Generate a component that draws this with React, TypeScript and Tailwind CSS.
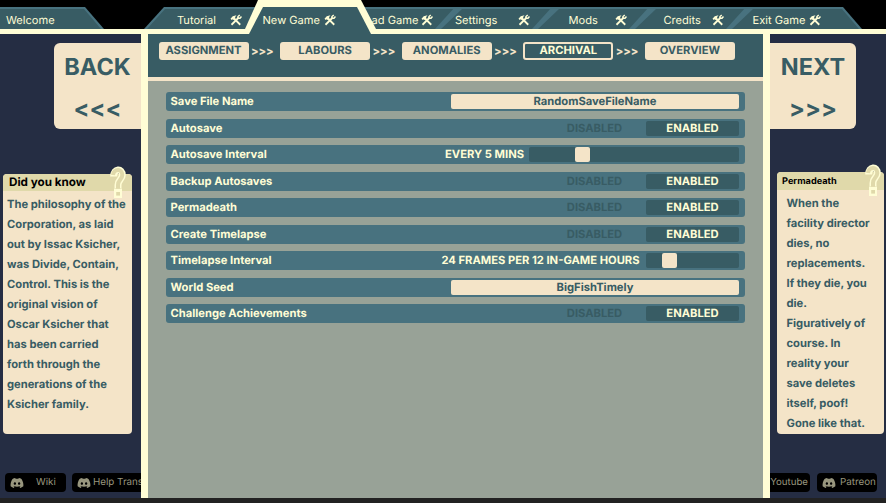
import type { ReactNode } from "react";
import { FaDiscord } from "react-icons/fa";

const ToolsIcon = () => (
  <svg viewBox="0 0 24 24" className="h-3 w-3 shrink-0" fill="none" stroke="#fffdd5">
    <path d="M8 9 L20.5 21.5" strokeWidth="3.6" />
    <path d="M1 9.5 L5.5 4.5 L13 2.5 L10 6.5 L11 8.5 L7.5 12 L5.5 10.3 L3.5 12 Z" fill="#fffdd5" stroke="none" />
    <path d="M3 21.5 L17 7.5" strokeWidth="3.6" />
    <path d="M19.5 2 L16 5 V8.5 H20 L23 5" strokeWidth="3" />
  </svg>
);

const QuestionMark = ({ className }: { className: string }) => (
  <svg viewBox="0 0 16 33" className={`absolute h-[33px] w-4 ${className}`} fill="none">
    <path d="M3.7 10.4 C3.7 2.2 12.3 2 12.3 9 C12.3 13.5 8 13.5 8 19 V22" stroke="#fffdd5" strokeWidth="7" />
    <path d="M4 22.5 h8 v9.5 h-8 z" fill="#fffdd5" />
    <path d="M3 9 C4.2 2.4 12.3 2.4 12.3 9 C12.3 13.5 8 13.5 8 19 V22.8" stroke="#e0d9aa" strokeWidth="4" />
    <path d="M6.2 26 h3.8 v3.6 h-3.8 z" fill="#e0d9aa" />
  </svg>
);

type TabProps = { label: string; text: string; edge?: string };

const wideEdge = "[clip-path:polygon(27px_2px,116px_2px,133px_100%,6px_100%)]";
const thinEdge = "[clip-path:polygon(21px_2px,116px_2px,133px_100%,3px_100%)]";

const Tab = ({ label, text, edge = wideEdge }: TabProps) => (
  <div className="-ml-[39px] h-[22px] w-[136px] shrink-0 bg-[#48727f] [clip-path:polygon(20px_0,117px_0,100%_100%,0_100%)]">
    <div className={`flex h-full items-center bg-[#385c64] pt-[4px] ${edge}`}>
      <span className={`shrink-0 whitespace-nowrap ${text}`}>{label}</span>
      <ToolsIcon />
    </div>
  </div>
);

const ActiveTab = () => (
  <div className="relative z-10 -ml-[39px] h-[34px] w-[136px] shrink-0 self-start bg-[#fffdd5] [clip-path:polygon(17px_0,120px_0,135px_29px,135px_100%,4px_100%,4px_29px)]">
    <div className="flex h-full items-center bg-[#385c64] pt-[6px] [clip-path:polygon(22px_7px,116px_7px,130px_100%,8px_100%)]">
      <span className="w-[83px] shrink-0 whitespace-nowrap pl-[21.5px]">New Game</span>
      <ToolsIcon />
    </div>
  </div>
);

const Toggle = () => (
  <>
    <span className="w-[103px] text-center text-[#385c64]">DISABLED</span>
    <span className="flex h-[15px] w-[93px] items-center justify-center rounded-[2px] bg-[#385c64]">ENABLED</span>
  </>
);

const Field = ({ value }: { value: string }) => (
  <div className="flex h-[15px] w-72 items-center justify-center rounded-[2px] bg-[#f4e4c8] text-[#385c64]">{value}</div>
);

const Slider = ({ label, track }: { label: string; track: string }) => (
  <>
    <span>{label}</span>
    <div className={`h-[15px] rounded-[2px] bg-[#385c64] ${track}`}>
      <div className="h-[15px] w-[15px] rounded-[2px] bg-[#f4e4c8]" />
    </div>
  </>
);

const settings: { name: string; control: ReactNode }[] = [
  { name: "Save File Name", control: <Field value="RandomSaveFileName" /> },
  { name: "Autosave", control: <Toggle /> },
  { name: "Autosave Interval", control: <Slider label="EVERY 5 MINS" track="ml-[5px] w-[210px] pl-[46px]" /> },
  { name: "Backup Autosaves", control: <Toggle /> },
  { name: "Permadeath", control: <Toggle /> },
  { name: "Create Timelapse", control: <Toggle /> },
  { name: "Timelapse Interval", control: <Slider label="24 FRAMES PER 12 IN-GAME HOURS" track="ml-[6.5px] w-[93px] pl-4" /> },
  { name: "World Seed", control: <Field value="BigFishTimely" /> },
  { name: "Challenge Achievements", control: <Toggle /> },
];

const stages = ["ASSIGNMENT", "LABOURS", "ANOMALIES", "ARCHIVAL", "OVERVIEW"];

const didYouKnow = [
  "The philosophy of the", "Corporation, as laid", "out by Issac Ksicher,", "was Divide, Contain,",
  "Control. This is the", "original vision of", "Oscar Ksicher that", "has been carried",
  "forth through the", "generations of the", "Ksicher family.",
];

const permadeath = [
  "When the", "facility director", "dies, no", "replacements.", "If they die, you", "die.",
  "Figuratively of", "course. In", "reality your", "save deletes", "itself, poof!", "Gone like that.",
];

const Lines = ({ lines, className }: { lines: string[]; className: string }) => (
  <div className={`text-[11.2px] leading-5 font-bold text-[#385c64] ${className}`}>
    {lines.map((line) => (
      <p key={line} className="whitespace-nowrap">{line}</p>
    ))}
  </div>
);

const LinkButton = ({ label, className }: { label: string; className: string }) => (
  <div className={`flex h-[19px] shrink-0 items-center rounded-[4px] bg-black text-[9.8px] text-[#98967e] ${className}`}>
    <FaDiscord className="h-[14px] w-[14px] shrink-0" />
    <span className="pt-[2px] whitespace-nowrap">{label}</span>
  </div>
);

export default function App() {
  return (
    <div className="flex h-[503px] w-[886px] flex-col overflow-hidden bg-[#222222] font-['Inter',sans-serif] [text-rendering:geometricPrecision]">
      <nav className="flex h-[29px] shrink-0 items-end bg-black text-[11.1px] text-[#fffdd5]">
        <div className="mr-[79px] h-[22px] w-[104px] shrink-0 bg-[#48727f] [clip-path:polygon(0_0,85px_0,100%_100%,0_100%)]">
          <div className="flex h-full items-center bg-[#385c64] pt-[4px] pl-[6px] [clip-path:polygon(0_2px,84px_2px,101px_100%,0_100%)]">Welcome</div>
        </div>
        <Tab label="Tutorial" text="w-[86px] pl-[33px]" edge={thinEdge} />
        <ActiveTab />
        <Tab label="Load Game" text="w-[82.5px] pl-[20.5px]" />
        <Tab label="Settings" text="w-[82.5px] pl-5" />
        <Tab label="Mods" text="w-[82.5px] pl-[36.5px]" />
        <Tab label="Credits" text="w-[82.5px] pl-[34.5px]" />
        <Tab label="Exit Game" text="w-[82.5px] pl-[26.5px]" />
      </nav>
      <div className="h-[5px] shrink-0 bg-[#fffdd5]" />
      <div className="flex h-[464px]">
        <aside className="flex w-[141px] shrink-0 flex-col overflow-hidden bg-[#252d43]">
          <div className="mt-[9px] ml-[54px] flex h-[86px] w-[87px] flex-col items-center rounded-l-[6px] bg-[#f4e4c8] text-[23.5px] font-bold text-[#385c64]">
            <span className="mt-[9px] leading-[30px]">BACK</span>
            <span className="mt-3 leading-[30px]">&lt;&lt;&lt;</span>
          </div>
          <section className="relative mt-[45px] ml-[3px] h-[260px] w-[129px] rounded-[4px] bg-[#f4e4c8]">
            <h2 className="h-[17px] rounded-t-[4px] bg-[#e0d9aa] pl-[6px] text-[11.7px] leading-[17px] font-bold text-black">Did you know</h2>
            <QuestionMark className="-top-2 left-[107px]" />
            <Lines lines={didYouKnow} className="pt-[2.5px] pl-1" />
          </section>
          <div className="mt-[39px] flex gap-[6px] pl-[5px]">
            <LinkButton label="Wiki" className="w-[61px] gap-3 pl-[5px]" />
            <LinkButton label="Help Translate" className="w-[100px] gap-[2px] pl-[5px]" />
          </div>
        </aside>
        <div className="w-[7px] shrink-0 bg-[#fffdd5]" />
        <main className="flex w-[615px] shrink-0 flex-col bg-[#98a297]">
          <header className="h-[47px] border-b-4 border-[#f4e4c8] bg-[#385c64] pt-2 pl-[10.5px]">
            <div className="flex h-[18px] text-[11.2px] font-bold text-[#f4e4c8]">
              {stages.map((stage, i) => (
                <div key={stage} className="flex items-center">
                  {i > 0 && <span className="w-[31.6px] pr-1 text-center leading-[18px]">&gt;&gt;&gt;</span>}
                  <span
                    className={`flex h-[18px] w-[90px] items-center justify-center rounded-[3px] leading-[14px] ${
                      stage === "ARCHIVAL"
                        ? "border-2 border-[#f4e4c8] pb-[2px] text-[#fffdd5]"
                        : "bg-[#f4e4c8] pb-[2px] text-[#385c64]"
                    }`}
                  >
                    {stage}
                  </span>
                </div>
              ))}
            </div>
          </header>
          <div className="flex flex-col gap-[7.5px] pt-[11px] pr-[18px] pl-[18px] text-[11.2px] font-bold text-[#fffdd5]">
            {settings.map(({ name, control }) => (
              <div key={name} className="flex h-[19px] items-center rounded-[3px] bg-[#48727f] pr-[6px] pl-[4.5px]">
                <span className="mr-auto">{name}</span>
                {control}
              </div>
            ))}
          </div>
        </main>
        <div className="w-[7px] shrink-0 bg-[#fffdd5]" />
        <aside className="flex w-[116px] shrink-0 flex-col overflow-hidden bg-[#252d43]">
          <div className="mt-[9px] flex h-[86px] w-[86px] flex-col items-center rounded-r-[6px] bg-[#f4e4c8] text-[23.5px] font-bold text-[#385c64]">
            <span className="mt-[9px] leading-[30px]">NEXT</span>
            <span className="mt-3 leading-[30px]">&gt;&gt;&gt;</span>
          </div>
          <section className="relative mt-[43px] ml-[7px] h-[262px] w-[107px] rounded-[4px] bg-[#f4e4c8]">
            <h2 className="h-[18px] rounded-t-[4px] bg-[#e0d9aa] pl-[5px] text-[9.2px] leading-[20px] font-bold text-black">Permadeath</h2>
            <QuestionMark className="-top-2 left-[88px]" />
            <Lines lines={permadeath} className="pt-[3px] pl-[9.5px]" />
          </section>
          <div className="mt-[39px] flex gap-[7px]">
            <div className="flex h-[19px] w-10 items-center justify-end rounded-r-[4px] bg-black pt-[2px] pr-[2px] text-[9.7px] text-[#98967e]">Youtube</div>
            <LinkButton label="Patreon" className="w-[60px] gap-[4px] pl-[5px]" />
          </div>
        </aside>
      </div>
    </div>
  );
}
